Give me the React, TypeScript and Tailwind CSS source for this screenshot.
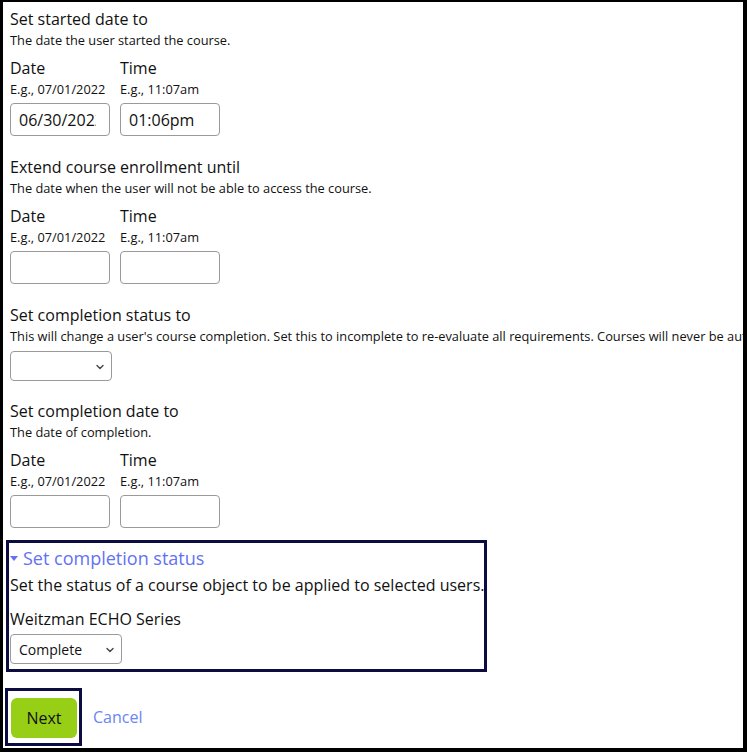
import React from "react";

const font = { fontFamily: '"Open Sans", "Noto Sans", sans-serif' };

function Chevron({ className }: { className?: string }) {
  return (
    <svg className={className} width="8" height="6" viewBox="0 0 8 6" fill="none">
      <path d="M1 1.5 L4 4.5 L7 1.5" stroke="#444" strokeWidth="1.4" strokeLinecap="round" strokeLinejoin="round" />
    </svg>
  );
}

function Field({ value }: { value: string }) {
  return (
    <div className="mt-[4px] w-[100px] h-[33px] border border-[#9a9a9a] rounded-[4px] pl-[8px] flex items-center text-[16px] text-[#111]">
      <div className="w-[77px] overflow-hidden whitespace-nowrap">{value}</div>
    </div>
  );
}

function DateTime({ date = "", time = "" }: { date?: string; time?: string }) {
  return (
    <div className="flex gap-[10px] mt-[7px]">
      <div className="flex flex-col">
        <div className="text-[16px] leading-[22px] text-[#111]">Date</div>
        <div className="text-[12.8px] leading-[20px] text-[#111]">E.g., 07/01/2022</div>
        <Field value={date} />
      </div>
      <div className="flex flex-col">
        <div className="text-[16px] leading-[22px] text-[#111]">Time</div>
        <div className="text-[12.8px] leading-[20px] text-[#111]">E.g., 11:07am</div>
        <Field value={time} />
      </div>
    </div>
  );
}

export default function App() {
  return (
    <div
      className="w-[747px] h-[752px] overflow-hidden bg-white border-l-[3px] border-t-2 border-r-4 border-b-4 border-black pl-[7px] pt-[6px] text-[#111]"
      style={font}
    >
      {/* Section 1 */}
      <div className="text-[16px] leading-[22px]">Set started date to</div>
      <div className="text-[12.8px] leading-[20px]">The date the user started the course.</div>
      <DateTime date="06/30/2022" time="01:06pm" />

      {/* Section 2 */}
      <div className="mt-[20px] text-[16px] leading-[22px]">Extend course enrollment until</div>
      <div className="text-[12.8px] leading-[20px]">The date when the user will not be able to access the course.</div>
      <DateTime />

      {/* Section 3 */}
      <div className="mt-[20px] text-[16px] leading-[22px]">Set completion status to</div>
      <div className="text-[12.8px] leading-[20px] whitespace-nowrap">
        This will change a user's course completion. Set this to incomplete to re-evaluate all requirements. Courses will never be automatically marked incomplete.
      </div>
      <div className="relative mt-[5px] w-[102px] h-[30px] border border-[#9a9a9a] rounded-[4px]">
        <Chevron className="absolute right-[7px] top-[12px]" />
      </div>

      {/* Section 4 */}
      <div className="mt-[19px] text-[16px] leading-[22px]">Set completion date to</div>
      <div className="text-[12.8px] leading-[20px]">The date of completion.</div>
      <DateTime />

      {/* Completion status box */}
      <div className="mt-[12px] ml-[-4px] w-[481px] border-[3px] border-[#0c0c40] pl-[1px] pt-[4px] pb-[5px]">
        <div className="flex items-center text-[18px] leading-[22px] text-[#6272f2]">
          <svg width="8" height="5" viewBox="0 0 8 5" className="mr-[5px] mt-[1px]">
            <path d="M0 0 H8 L4 5 Z" fill="#6272f2" />
          </svg>
          Set completion status
        </div>
        <div className="mt-[5px] text-[16px] leading-[22px] whitespace-nowrap">
          Set the status of a course object to be applied to selected users.
        </div>
        <div className="mt-[12px] text-[16px] leading-[22px]">Weitzman ECHO Series</div>
        <div className="relative mt-[4px] w-[112px] h-[30px] border border-[#9a9a9a] rounded-[4px] flex items-center pl-[8px] text-[14px]">
          Complete
          <Chevron className="absolute right-[7px] top-[12px]" />
        </div>
      </div>

      {/* Buttons */}
      <div className="mt-[16px] flex items-center">
        <div className="ml-[-5px] border-[3px] border-[#0c0c40] pl-[3px] pr-[2px] pt-[7px] pb-[5px]">
          <div className="w-[66px] h-[40px] rounded-[6px] bg-[#97cf17] flex items-center justify-center text-[16px] text-[#111]">
            Next
          </div>
        </div>
        <span className="ml-[11px] text-[16px] text-[#6a86f2]">Cancel</span>
      </div>
    </div>
  );
}
